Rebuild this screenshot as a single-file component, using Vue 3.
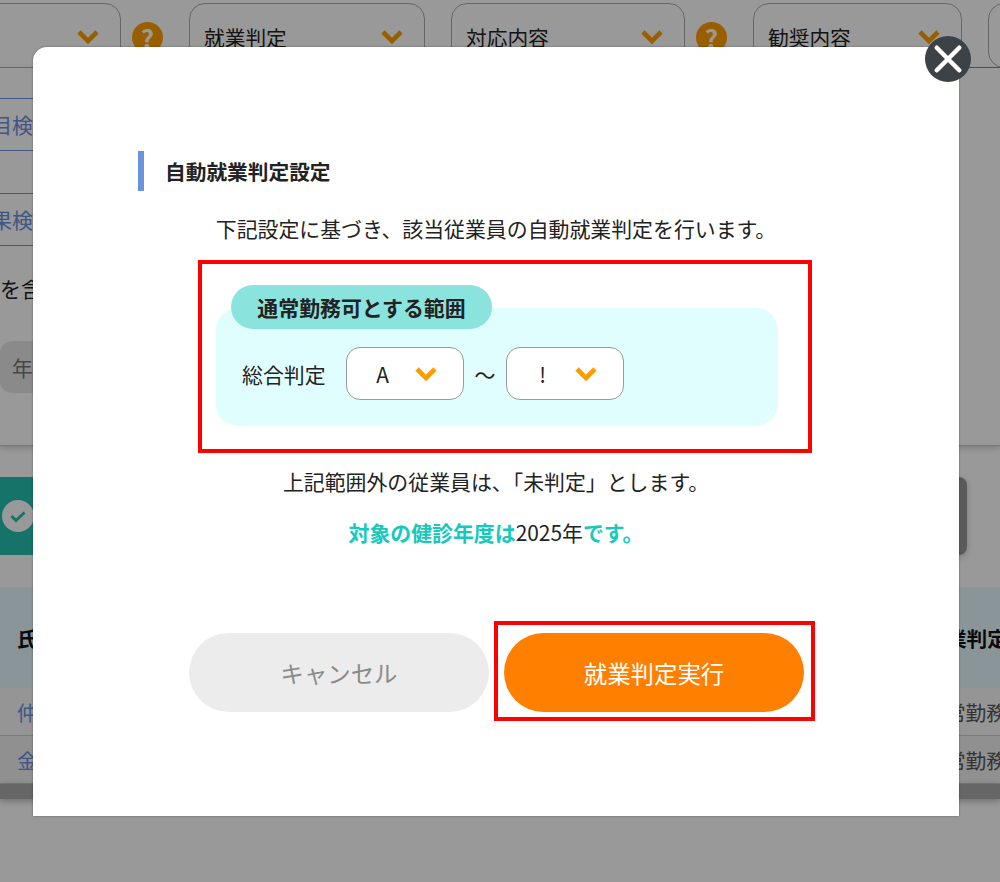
<script setup>
const selects = [
  { label: '', width: 152, help: true },
  { label: '就業判定', width: 236 },
  { label: '対応内容', width: 234, help: true },
  { label: '勧奨内容', width: 209 },
  { label: '', width: 60 },
]
const rows = [
  { name: '仲', status: '常勤務' },
  { name: '金', status: '常勤務' },
]
</script>

<template>
  <div class="page">
    <!-- page behind the modal -->
    <div class="back">
      <div class="filters">
        <div v-for="(s, i) in selects" :key="i" class="filter-group">
          <div class="filter" :style="{ width: s.width + 'px' }">
            <span>{{ s.label }}</span>
            <svg class="chev" viewBox="0 0 24 16" width="24" height="16">
              <path d="M3 3l9 9 9-9" fill="none" stroke="#ff9d00" stroke-width="4.6" />
            </svg>
          </div>
          <div v-if="s.help" class="help">?</div>
        </div>
      </div>
      <div class="search-box">
        <div class="link-btn">目検</div>
        <div class="link-btn two">果検</div>
        <div class="include">を含</div>
        <div class="year">年</div>
      </div>
      <div class="actions">
        <div class="notice">
          <div class="tick">
            <svg viewBox="0 0 20 20" width="20" height="20">
              <path d="M3.5 10l4.5 4.5 8.5-8" fill="none" stroke="#24c0b0" stroke-width="3" />
            </svg>
          </div>
        </div>
        <div class="dark-btn"></div>
      </div>
      <div class="table">
        <div class="thead">
          <span class="th-name">氏</span>
          <span class="th-status">業判定</span>
        </div>
        <div v-for="r in rows" :key="r.name" class="tr">
          <span class="td-name">{{ r.name }}</span>
          <span class="td-status">{{ r.status }}</span>
        </div>
        <div class="scrollbar"></div>
      </div>
    </div>

    <div class="overlay"></div>

    <div class="modal">
      <button class="close" type="button" aria-label="閉じる">
        <svg viewBox="0 0 24 24" width="30" height="30">
          <path d="M3 3l18 18M21 3L3 21" stroke="#fff" stroke-width="3.6" stroke-linecap="round" />
        </svg>
      </button>
      <h2 class="title">自動就業判定設定</h2>
      <p class="lead">下記設定に基づき、該当従業員の自動就業判定を行います。</p>
      <div class="mark range-mark">
        <div class="range">
          <div class="range-label">通常勤務可とする範囲</div>
          <div class="range-row">
            <span class="range-name">総合判定</span>
            <div class="pick">
              <span class="pick-value">A</span>
              <svg viewBox="0 0 24 16" width="24" height="16">
                <path d="M3 3l9 9 9-9" fill="none" stroke="#ff9d00" stroke-width="4.6" />
              </svg>
            </div>
            <span class="tilde">～</span>
            <div class="pick">
              <span class="pick-value">!</span>
              <svg viewBox="0 0 24 16" width="24" height="16">
                <path d="M3 3l9 9 9-9" fill="none" stroke="#ff9d00" stroke-width="4.6" />
              </svg>
            </div>
          </div>
        </div>
      </div>
      <p class="note">上記範囲外の従業員は、「未判定」とします。</p>
      <p class="target"><b>対象の健診年度は</b>2025年<b>です。</b></p>
      <div class="buttons">
        <button class="btn cancel" type="button">キャンセル</button>
        <div class="mark run-mark">
          <button class="btn run" type="button">就業判定実行</button>
        </div>
      </div>
    </div>
  </div>
</template>

<style>
html,
body {
  margin: 0;
  overflow: hidden;
}
</style>

<style scoped>
.page {
  position: relative;
  width: 1000px;
  height: 882px;
  overflow: hidden;
  background: #fff;
  font-family: "Noto Sans CJK JP", "Noto Sans", sans-serif;
  font-size: 20.9px;
  color: #222;
}

.back {
  width: 1000px;
}

.filters {
  display: flex;
  height: 68px;
  padding-top: 3px;
  box-sizing: border-box;
  border-bottom: 1px solid #888;
  margin-left: -31px;
}
.filter-group {
  display: flex;
  margin-right: 26px;
  flex: none;
}
.filter {
  display: flex;
  justify-content: space-between;
  box-sizing: border-box;
  height: 65px;
  padding: 18px 20px 0 14px;
  border: 1px solid #aaa;
  border-radius: 16px;
  font-size: 20.7px;
  line-height: 30px;
}
.chev {
  margin-top: 7px;
}
.help {
  width: 31px;
  height: 31px;
  margin: 19px 0 0 11px;
  border-radius: 50%;
  background: #ff9d00;
  color: #fff;
  font-weight: 700;
  font-size: 26px;
  line-height: 31px;
  text-align: center;
}

.search-box {
  box-sizing: border-box;
  height: 378px;
  padding-top: 30px;
  border-bottom: 1px solid #ccc;
  box-shadow: 0 2px 6px rgba(0, 0, 0, 0.2);
}
.link-btn {
  width: 100px;
  margin-left: -67px;
  box-sizing: border-box;
  border-top: 1px solid #6a8fe0;
  border-bottom: 1px solid #6a8fe0;
  color: #6a8fe0;
  text-align: right;
  line-height: 51px;
}
.link-btn.two {
  margin-top: 42px;
}
.include {
  margin-top: 27px;
  line-height: 30px;
}
.year {
  width: 44px;
  margin-top: 38px;
  padding-left: 12px;
  box-sizing: border-box;
  height: 52px;
  border-radius: 12px 0 0 12px;
  background: #e6e6e6;
  color: #777;
  line-height: 52px;
}

.actions {
  display: flex;
  justify-content: space-between;
  height: 78px;
  margin-top: 31px;
  padding-right: 33px;
}
.notice {
  display: flex;
  align-items: center;
  width: 200px;
  padding-left: 2px;
  background: #24c0b0;
}
.tick {
  display: flex;
  align-items: center;
  justify-content: center;
  width: 32px;
  height: 32px;
  border-radius: 50%;
  background: #fff;
}
.dark-btn {
  width: 100px;
  border-radius: 8px;
  background: #969696;
  box-shadow: 0 2px 6px rgba(0, 0, 0, 0.2);
}

.table {
  margin-top: 32px;
}
.thead {
  display: flex;
  justify-content: space-between;
  height: 101px;
  padding-left: 17px;
  background: #e6f9ff;
  font-size: 20.7px;
  font-weight: 700;
  line-height: 102px;
  color: #111;
}
.th-status {
  margin-right: -8px;
}
.tr {
  display: flex;
  justify-content: space-between;
  box-sizing: border-box;
  height: 48px;
  padding-left: 17px;
  border-bottom: 1px solid #ccc;
  background: #f8f8f8;
  font-size: 20.7px;
  line-height: 48px;
}
.tr + .tr {
  background: #f0f0f0;
}
.td-name {
  color: #6a8fe0;
}
.td-status {
  color: #555;
  margin-right: -7px;
}
.scrollbar {
  height: 15px;
  background: #aaa;
  box-shadow: 0 2px 6px rgba(0, 0, 0, 0.3);
}

.overlay {
  position: absolute;
  inset: 0;
  background: rgba(0, 0, 0, 0.4);
}

.modal {
  position: absolute;
  left: 33px;
  top: 47px;
  width: 926px;
  height: 769px;
  box-sizing: border-box;
  padding: 104px 105px 0;
  background: #fff;
  border-radius: 14px 0 0 0;
  box-shadow: 0 0 2px rgba(0, 0, 0, 0.4);
}
.close {
  position: absolute;
  top: -11px;
  right: -12px;
  display: flex;
  align-items: center;
  justify-content: center;
  width: 46px;
  height: 46px;
  padding: 0;
  border: 0;
  border-radius: 50%;
  background: #3d4246;
}
.title {
  height: 40px;
  margin: 0;
  padding-left: 21px;
  border-left: 6px solid #6a94dc;
  font-size: 20.7px;
  font-weight: 700;
  line-height: 40px;
  color: #222;
}
.lead,
.note {
  margin: 0;
  text-align: center;
  line-height: 30px;
}
.lead {
  margin-top: 22px;
}
.mark {
  box-sizing: border-box;
  border: 4px solid #f00;
}
.range-mark {
  width: 614px;
  height: 193px;
  margin: 17px 0 0 60px;
  padding: 20px 14px 0;
}
.range {
  position: relative;
  width: 562px;
  height: 118px;
  margin-top: 24px;
  border-radius: 22px;
  background: #e1fefe;
}
.range-label {
  position: absolute;
  left: 15px;
  top: -23px;
  width: 261px;
  height: 44px;
  border-radius: 22px;
  background: #8be3dd;
  text-align: center;
  font-weight: 700;
  line-height: 45px;
}
.range-row {
  display: flex;
  align-items: center;
  padding: 39px 0 0 26px;
}
.range-name {
  width: 104px;
}
.pick {
  display: flex;
  align-items: center;
  justify-content: space-between;
  box-sizing: border-box;
  width: 118px;
  height: 53px;
  padding-right: 25px;
  border: 1px solid #999;
  border-radius: 14px;
  background: #fff;
}
.pick-value {
  box-sizing: border-box;
  width: 67px;
  padding-left: 4px;
  text-align: center;
}
.tilde {
  width: 42px;
  text-align: center;
}
.note {
  margin-top: 13px;
}
.target {
  margin: 21px 0 0;
  text-align: center;
  line-height: 30px;
}
.target b {
  color: #16c9bc;
}
.buttons {
  display: flex;
  align-items: flex-start;
  margin: 74px 0 0 51px;
}
.btn {
  width: 300px;
  height: 79px;
  padding: 0;
  border: 0;
  border-radius: 40px;
  font-family: inherit;
  font-size: 23.4px;
  font-weight: 400;
}
.cancel {
  margin-top: 12px;
  background: #ececec;
  color: #8a8a8a;
}
.run-mark {
  margin-left: 5px;
  padding: 8px 7px 5px 6px;
}
.run {
  display: block;
  background: #ff8000;
  color: #fff;
}
</style>
